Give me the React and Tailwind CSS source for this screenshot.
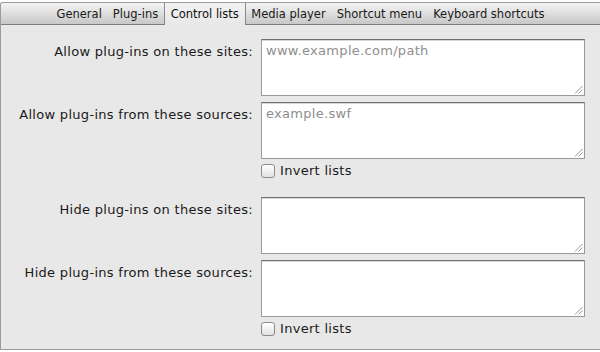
import React from "react";

const tabs = ["General", "Plug-ins", "Control lists", "Media player", "Shortcut menu", "Keyboard shortcuts"];

function Grip() {
  return (
    <svg className="absolute right-[1px] bottom-[1px]" width="9" height="9" viewBox="0 0 9 9">
      <line x1="8.5" y1="1" x2="1" y2="8.5" stroke="#8a8a8a" strokeWidth="0.9" />
      <line x1="8.5" y1="4.5" x2="4.5" y2="8.5" stroke="#8a8a8a" strokeWidth="0.9" />
    </svg>
  );
}

function Box({ placeholder }) {
  return (
    <div className="relative h-[57px] w-[324px] bg-white border border-[#9a9a9a] border-t-[#707070] shadow-[inset_0_1px_0_#d8d8d8]">
      {placeholder && (
        <div className="pl-[4px] pt-[3px] text-[#8e8e8e]">{placeholder}</div>
      )}
      <Grip />
    </div>
  );
}

function Row({ label, placeholder }) {
  return (
    <div className="flex items-start">
      <div className="w-[260px] text-right pr-[8px] pt-[5px] text-[#1a1a1a]">{label}</div>
      <Box placeholder={placeholder} />
    </div>
  );
}

function Check() {
  return (
    <div className="flex items-center pl-[260px] h-[20px] mt-[2px]">
      <div className="w-[14px] h-[14px] rounded-[3px] border border-[#8c8c8c] bg-gradient-to-b from-white to-[#e2e2e2]" />
      <span className="ml-[5px] text-[#1a1a1a]">Invert lists</span>
    </div>
  );
}

export default function App() {
  return (
    <div
      className="w-[600px] h-[352px] bg-white overflow-hidden text-[13px] leading-[16px] tracking-[0.3px]"
      style={{ fontFamily: '"Lucida Grande", "DejaVu Sans", sans-serif' }}
    >
      <div className="mt-[2px] h-[348px] bg-[#e8e8e8] border-l border-b border-t border-[#9b9b9b] rounded-tl-[3px] flex flex-col">
        <div className="h-[22px] flex items-stretch pl-[50px] bg-gradient-to-b from-[#f4f4f4] to-[#c8c8c8] border-b border-[#7d7d7d] rounded-tl-[3px] text-[11.5px] tracking-normal">
          {tabs.map((t) =>
            t === "Control lists" ? (
              <div
                key={t}
                className="px-[6px] flex items-center -mb-px bg-gradient-to-b from-[#f2f2f2] to-[#e8e8e8] border-l border-r border-[#8a8a8a] text-[#111]"
              >
                {t}
              </div>
            ) : (
              <div key={t} className="px-[5.5px] flex items-center text-[#1a1a1a]">
                {t}
              </div>
            )
          )}
        </div>
        <div className="pt-[14px] flex flex-col">
          <div className="flex flex-col gap-[6px]">
            <Row label="Allow plug-ins on these sites:" placeholder="www.example.com/path" />
            <Row label="Allow plug-ins from these sources:" placeholder="example.swf" />
          </div>
          <Check />
          <div className="h-[16px]" />
          <div className="flex flex-col gap-[6px]">
            <Row label="Hide plug-ins on these sites:" />
            <Row label="Hide plug-ins from these sources:" />
          </div>
          <Check />
        </div>
      </div>
    </div>
  );
}
